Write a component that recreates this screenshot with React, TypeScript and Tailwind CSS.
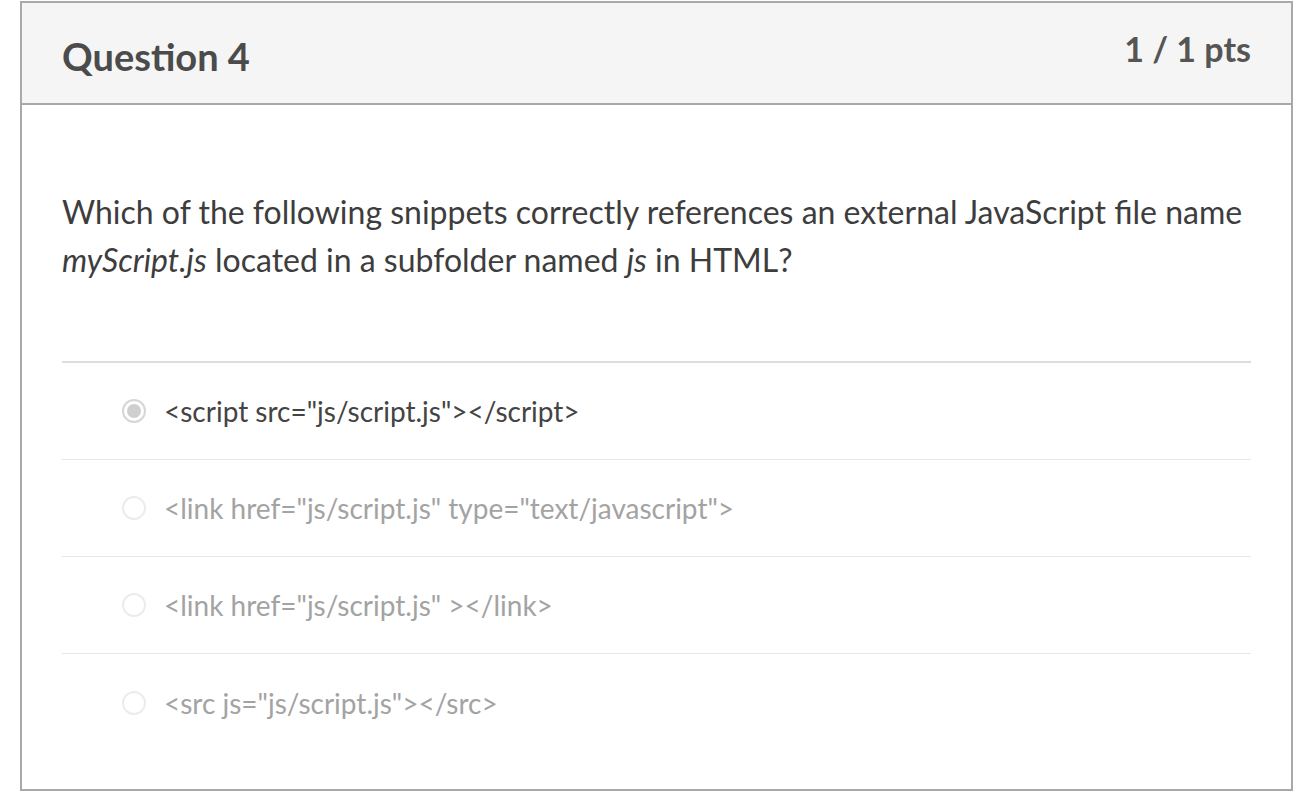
import React from "react";

const options = [
    { label: '<script src="js/script.js"></script>', selected: true },
    { label: '<link href="js/script.js" type="text/javascript">', selected: false },
    { label: '<link href="js/script.js" ></link>', selected: false },
    { label: '<src js="js/script.js"></src>', selected: false },
];

function Radio({ selected }: { selected: boolean }) {
    return selected ? (
        <span className="flex h-[24px] w-[24px] shrink-0 items-center justify-center rounded-full border-2 border-[#d6d6d6] bg-white">
            <span className="h-[14px] w-[14px] rounded-full bg-[#cfcfcf]" />
        </span>
    ) : (
        <span className="h-[24px] w-[24px] shrink-0 rounded-full border-2 border-[#ececec] bg-white" />
    );
}

export default function App() {
    return (
        <div className="min-h-[796px] bg-white pl-[20px] pt-[1px] font-['Lato','Open_Sans',sans-serif]">
            <div className="w-[1273px] h-[790px] border-2 border-[#a9a9a9] flex flex-col">
                <div className="h-[102px] shrink-0 bg-[#f5f5f5] border-b-2 border-[#a9a9a9] px-[40px] flex justify-between">
                    <h2 className="pt-[30px] text-[38px] font-bold text-[#4b4b4b] leading-[46px]">Question 4</h2>
                    <div className="pt-[24px] text-[34px] font-bold text-[#555] leading-[44px]">1 / 1 pts</div>
                </div>
                <div className="px-[40px]">
                    <p className="pt-[83px] pb-[77px] text-[32px] leading-[48px] text-[#3d3d3d]">
                        Which of the following snippets correctly references an external JavaScript file name{" "}
                        <em>myScript.js</em> located in a subfolder named <em>js</em> in HTML?
                    </p>
                    <div className="border-t-2 border-[#dddddd]">
                        {options.map((o, i) => (
                            <div
                                key={i}
                                className={
                                    "h-[97px] flex items-center gap-[18px] pl-[60px] " +
                                    (i < options.length - 1 ? "border-b border-[#e6e6e6]" : "")
                                }
                            >
                                <Radio selected={o.selected} />
                                <span
                                    className={
                                        "text-[28px] " + (o.selected ? "text-[#444]" : "text-[#a3a3a3]")
                                    }
                                >
                                    {o.label}
                                </span>
                            </div>
                        ))}
                    </div>
                </div>
            </div>
        </div>
    );
}
